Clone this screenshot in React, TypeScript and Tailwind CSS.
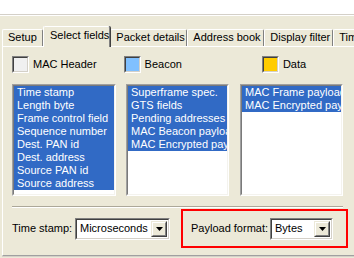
import React from "react";

const font = { fontFamily: '"Liberation Sans", Arial, sans-serif' };

function Tab({ label, w, selected }: { label: string; w: string; selected?: boolean }) {
  if (selected) {
    return (
      <div
        className={`${w} h-[21px] -mb-px bg-[#ECE9D8] border-t border-l border-white border-r border-r-[#808080] rounded-t-[2px] pt-[2px] pl-[6px] leading-[13px] whitespace-nowrap relative z-20 shadow-[1px_0_0_#404040]`}
      >
        {label}
      </div>
    );
  }
  return (
    <div
      className={`${w} h-[17px] bg-[#ECE9D8] border-t border-l border-white border-r border-r-[#808080] rounded-t-[2px] pt-[1px] pl-[5px] leading-[13px] whitespace-nowrap overflow-hidden shrink-0`}
    >
      {label}
    </div>
  );
}

function ColorBox({ color, label, ml }: { color: string; label: string; ml: string }) {
  return (
    <div className={`flex items-center ${ml}`}>
      <div className="w-[17px] h-[17px] border border-t-[#808080] border-l-[#808080] border-r-white border-b-white">
        <div className={`w-full h-full border border-t-[#404040] border-l-[#404040] border-r-[#D4D0C8] border-b-[#D4D0C8] ${color}`} />
      </div>
      <span className="ml-[4px] leading-[13px]">{label}</span>
    </div>
  );
}

function ListBox({ items, w, ml }: { items: string[]; w: string; ml: string }) {
  return (
    <div className={`${w} ${ml} h-[112px] border border-t-[#A0A0A0] border-l-[#A0A0A0] border-r-white border-b-white shrink-0`}>
      <div className="w-full h-full border border-t-[#7A7A7A] border-l-[#7A7A7A] border-r-[#F4F3EE] border-b-[#F4F3EE] bg-white overflow-hidden">
        {items.map((t) => (
          <div key={t} className="h-[13px] leading-[13px] bg-[#316AC5] text-white pl-[3px] whitespace-nowrap overflow-hidden">
            {t}
          </div>
        ))}
      </div>
    </div>
  );
}

function Combo({ value, w }: { value: string; w: string }) {
  return (
    <div className={`${w} h-[22px] border border-t-[#808080] border-l-[#808080] border-r-white border-b-white shrink-0`}>
      <div className="w-full h-full border border-t-[#404040] border-l-[#404040] border-r-[#D4D0C8] border-b-[#D4D0C8] bg-white flex items-center">
        <span className="pl-[3px] flex-1 leading-[13px] whitespace-nowrap overflow-hidden">{value}</span>
        <div className="w-[16px] h-[16px] bg-[#ECE9D8] border border-t-[#ECE9D8] border-l-[#ECE9D8] border-r-[#404040] border-b-[#404040] mr-px flex">
          <div className="flex-1 border border-t-white border-l-white border-r-[#808080] border-b-[#808080] flex items-center justify-center">
            <svg width="7" height="4" viewBox="0 0 7 4">
              <path d="M0 0H7L3.5 4Z" fill="#000" />
            </svg>
          </div>
        </div>
      </div>
    </div>
  );
}

export default function App() {
  return (
    <div className="w-[354px] h-[258px] bg-[#ECE9D8] overflow-hidden flex flex-col text-[11px] text-black" style={font}>
      <div className="h-[14px] bg-white shrink-0" />
      <div className="h-px bg-[#D4D0C8] shrink-0" />
      <div className="h-px bg-white shrink-0" />
      <div className="h-[10px] shrink-0" />
      <div className="h-[20px] flex items-end pl-[2px] relative z-10 shrink-0">
        <Tab label="Setup" w="w-[41px]" />
        <Tab label="Select fields" w="w-[71px]" selected />
        <Tab label="Packet details" w="w-[77px]" />
        <Tab label="Address book" w="w-[77px]" />
        <Tab label="Display filter" w="w-[69px]" />
        <Tab label="Time" w="w-[40px]" />
      </div>
      <div className="ml-[2px] h-[210px] border-t border-l border-white border-b border-b-[#A0A0A0] shadow-[0_1px_0_#D4D0C8] flex flex-col pl-[9px] shrink-0">
        <div className="mt-[9px] flex h-[17px]">
          <ColorBox color="bg-[#F0F0F0]" label="MAC Header" ml="" />
          <ColorBox color="bg-[#80C0FF]" label="Beacon" ml="ml-[27px]" />
          <ColorBox color="bg-[#FFCC00]" label="Data" ml="ml-[80px]" />
        </div>
        <div className="mt-[11px] flex">
          <ListBox
            w="w-[104px]"
            ml=""
            items={[
              "Time stamp",
              "Length byte",
              "Frame control field",
              "Sequence number",
              "Dest. PAN id",
              "Dest. address",
              "Source PAN id",
              "Source address",
            ]}
          />
          <ListBox
            w="w-[103px]"
            ml="ml-[10px]"
            items={["Superframe spec.", "GTS fields", "Pending addresses", "MAC Beacon payload", "MAC Encrypted payload"]}
          />
          <ListBox w="w-[103px]" ml="ml-[11px]" items={["MAC Frame payload", "MAC Encrypted payload"]} />
        </div>
        <div className="mt-[10px] w-[331px] h-px bg-[#ACA899]" />
        <div className="w-[331px] h-px bg-white" />
        <div className="mt-[1px] flex items-center h-[39px]">
          <span className="leading-[13px] w-[63px]">Time stamp:</span>
          <Combo value="Microseconds" w="w-[95px]" />
          <div className="ml-[11px] w-[167px] h-[39px] border-2 border-[#FF0000] flex items-center pl-[8px]">
            <span className="leading-[13px] w-[79px]">Payload format:</span>
            <Combo value="Bytes" w="w-[63px]" />
          </div>
        </div>
      </div>
    </div>
  );
}
